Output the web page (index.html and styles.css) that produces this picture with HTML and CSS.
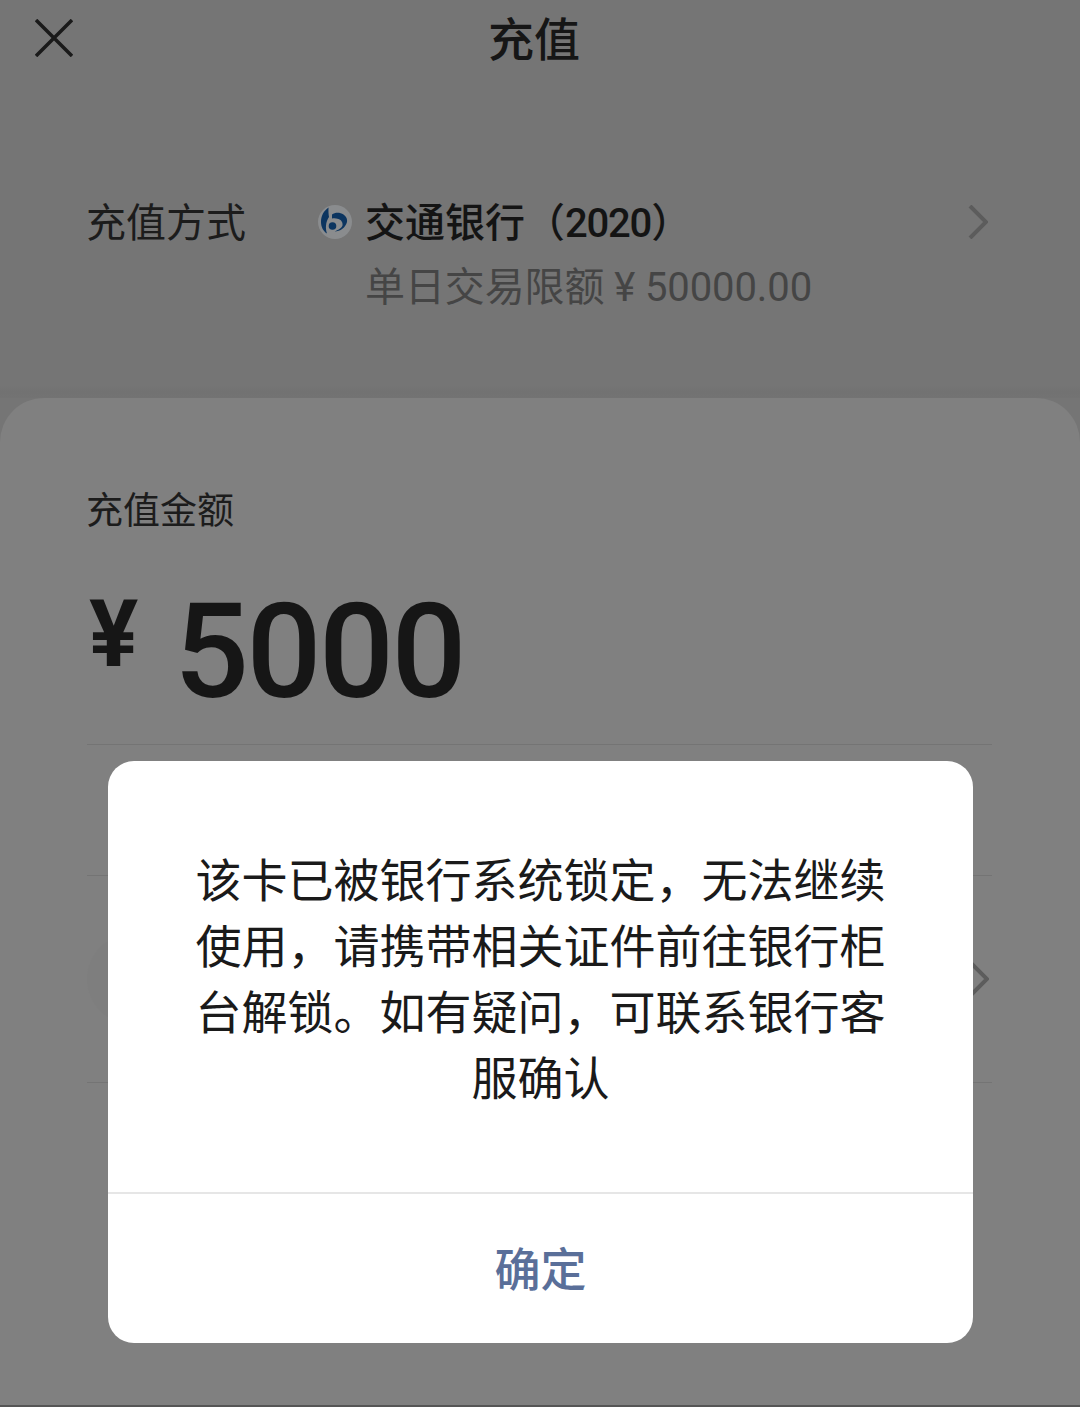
FILE: index.html
```html
<!DOCTYPE html>
<html lang="zh-CN">
<head>
<meta charset="utf-8">
<title>充值</title>
<link rel="stylesheet" href="styles.css">
</head>
<body>
<div class="page">
  <header class="header">
    <svg class="close" viewBox="0 0 38 38" width="38" height="38"><path d="M1 1 37 37M37 1 1 37"/></svg>
    <h1 class="title">充值</h1>
  </header>
  <section class="method">
    <div class="method-label">充值方式</div>
    <svg class="bank-logo" viewBox="0 0 36 36" width="36" height="36">
      <circle class="logo-bg" cx="17" cy="18" r="17"/>
      <path class="logo-mark" d="M10.500 3.500C5.500 7 3 12 3 18c0 5 2.500 9.500 6 11.500C8 27 7.800 24 8 21.500 8.300 18 9.500 15 11 13 10.500 10 10.300 6.500 10.500 3.500Z"/>
      <path class="logo-mark" d="M14 10.500C17 8 22 8 25.500 10.500 28.500 12.500 29.500 15.500 29 18 27.500 23.500 22.500 27.500 16.500 27.500 20 26 23.500 24.500 24.500 21.500 25 19 23.500 16 20.500 15 18 14.200 16 14 14 14.500Z"/>
      <circle class="logo-mark" cx="14.500" cy="22" r="3.800"/>
    </svg>
    <div class="bank-info">
      <div class="bank-name">交通银行（<span class="bank-digits">2020</span>）</div>
      <div class="bank-limit">单日交易限额 ¥ 50000.00</div>
    </div>
    <svg class="chevron" viewBox="0 0 20 34" width="20" height="34"><path d="M2 1 18 17 2 33"/></svg>
  </section>
  <section class="sheet">
    <div class="amount-label">充值金额</div>
    <div class="amount"><span class="currency">¥</span><span class="value">5000</span></div>
    <div class="row row-short"></div>
    <div class="row row-card">
      <div class="card-icon"></div>
      <svg class="chevron" viewBox="0 0 20 34" width="20" height="34"><path d="M2 1 18 17 2 33"/></svg>
    </div>
  </section>
  <div class="bottom-line"></div>
</div>
<div class="dialog">
  <div class="dialog-body">该卡已被银行系统锁定，无法继续使用，请携带相关证件前往银行柜台解锁。如有疑问，可联系银行客服确认</div>
  <div class="dialog-action">确定</div>
</div>
</body>
</html>
```
FILE: styles.css
```css
* { box-sizing: border-box; }
html, body { margin: 0; padding: 0; }
body {
  position: relative;
  width: 1080px;
  height: 1407px;
  overflow: hidden;
  background: #757575;
  font-family: Roboto, "Noto Sans CJK SC", sans-serif;
  color: #1c1c1c;
}
.page {
  display: flex;
  flex-direction: column;
  height: 1407px;
}
.header {
  display: flex;
  align-items: center;
  height: 80px;
  padding-left: 35px;
  gap: 415px;
}
.close {
  margin-top: -4px;
  fill: none;
  stroke: #1a1a1a;
  stroke-width: 3.500;
}
.title {
  margin: 0;
  font-size: 46px;
  font-weight: 500;
  line-height: 80px;
  color: #161616;
}
.method {
  display: flex;
  align-items: flex-start;
  height: 318px;
  padding: 122px 92px 0 86px;
  background: linear-gradient(to bottom, #757575 0, #757575 306px, #727272 312px, #737373 318px);
}
.method-label {
  width: 232px;
  font-size: 40px;
  line-height: 44px;
}
.bank-logo { margin-top: 2px; }
.logo-bg { fill: #8a8c8e; }
.logo-mark { fill: #0c3560; }
.bank-info { margin-left: 11px; }
.bank-name {
  font-size: 40px;
  font-weight: 500;
  line-height: 44px;
  color: #141414;
}
.bank-digits { letter-spacing: -1.200px; }
.bank-limit {
  margin-top: 20px;
  font-size: 40px;
  letter-spacing: -0.100px;
  line-height: 44px;
  color: #454545;
}
.chevron {
  fill: none;
  stroke: #5c5c5c;
  stroke-width: 4;
}
.method .chevron { margin-left: auto; margin-top: 3px; }
.row-card .chevron { margin-right: 3px; }
.sheet {
  flex: 1;
  padding: 91px 91px 0 87px;
  background: #808080;
  border-radius: 44px 44px 0 0;
}
.amount-label {
  margin-left: -1px;
  font-size: 37px;
  line-height: 46px;
}
.amount {
  display: flex;
  align-items: baseline;
  width: 905px;
  height: 210px;
  padding-top: 51px;
  border-bottom: 1px solid #747474;
  color: #161616;
}
.currency {
  width: 87px;
  padding-left: 2px;
  font-size: 92px;
  font-weight: 700;
  line-height: 132px;
  position: relative;
  top: -31px;
}
.value {
  font-size: 132px;
  font-weight: 500;
  letter-spacing: -2.500px;
  line-height: 132px;
}
.row-short {
  width: 905px;
  height: 131px;
  border-bottom: 1px solid #747474;
}
.row-card {
  display: flex;
  align-items: center;
  justify-content: space-between;
  width: 905px;
  height: 207px;
  border-bottom: 1px solid #747474;
}
.card-icon {
  width: 90px;
  height: 90px;
  border-radius: 50%;
  background: #7e7e7e;
}
.bottom-line {
  height: 2px;
  background: #555555;
}
.dialog {
  position: absolute;
  top: 761px;
  left: 108px;
  width: 865px;
  height: 582px;
  display: flex;
  flex-direction: column;
  background: #ffffff;
  border-radius: 26px;
  overflow: hidden;
}
.dialog-body {
  display: flex;
  align-items: center;
  height: 433px;
  padding: 6px 87px 0;
  border-bottom: 2px solid #e6e6e6;
  font-size: 46px;
  line-height: 66px;
  text-align: center;
  color: #1a1a1a;
}
.dialog-action {
  flex: 1;
  display: flex;
  align-items: center;
  justify-content: center;
  padding-bottom: 5px;
  font-size: 46px;
  font-weight: 500;
  color: #5a6f99;
}
```
